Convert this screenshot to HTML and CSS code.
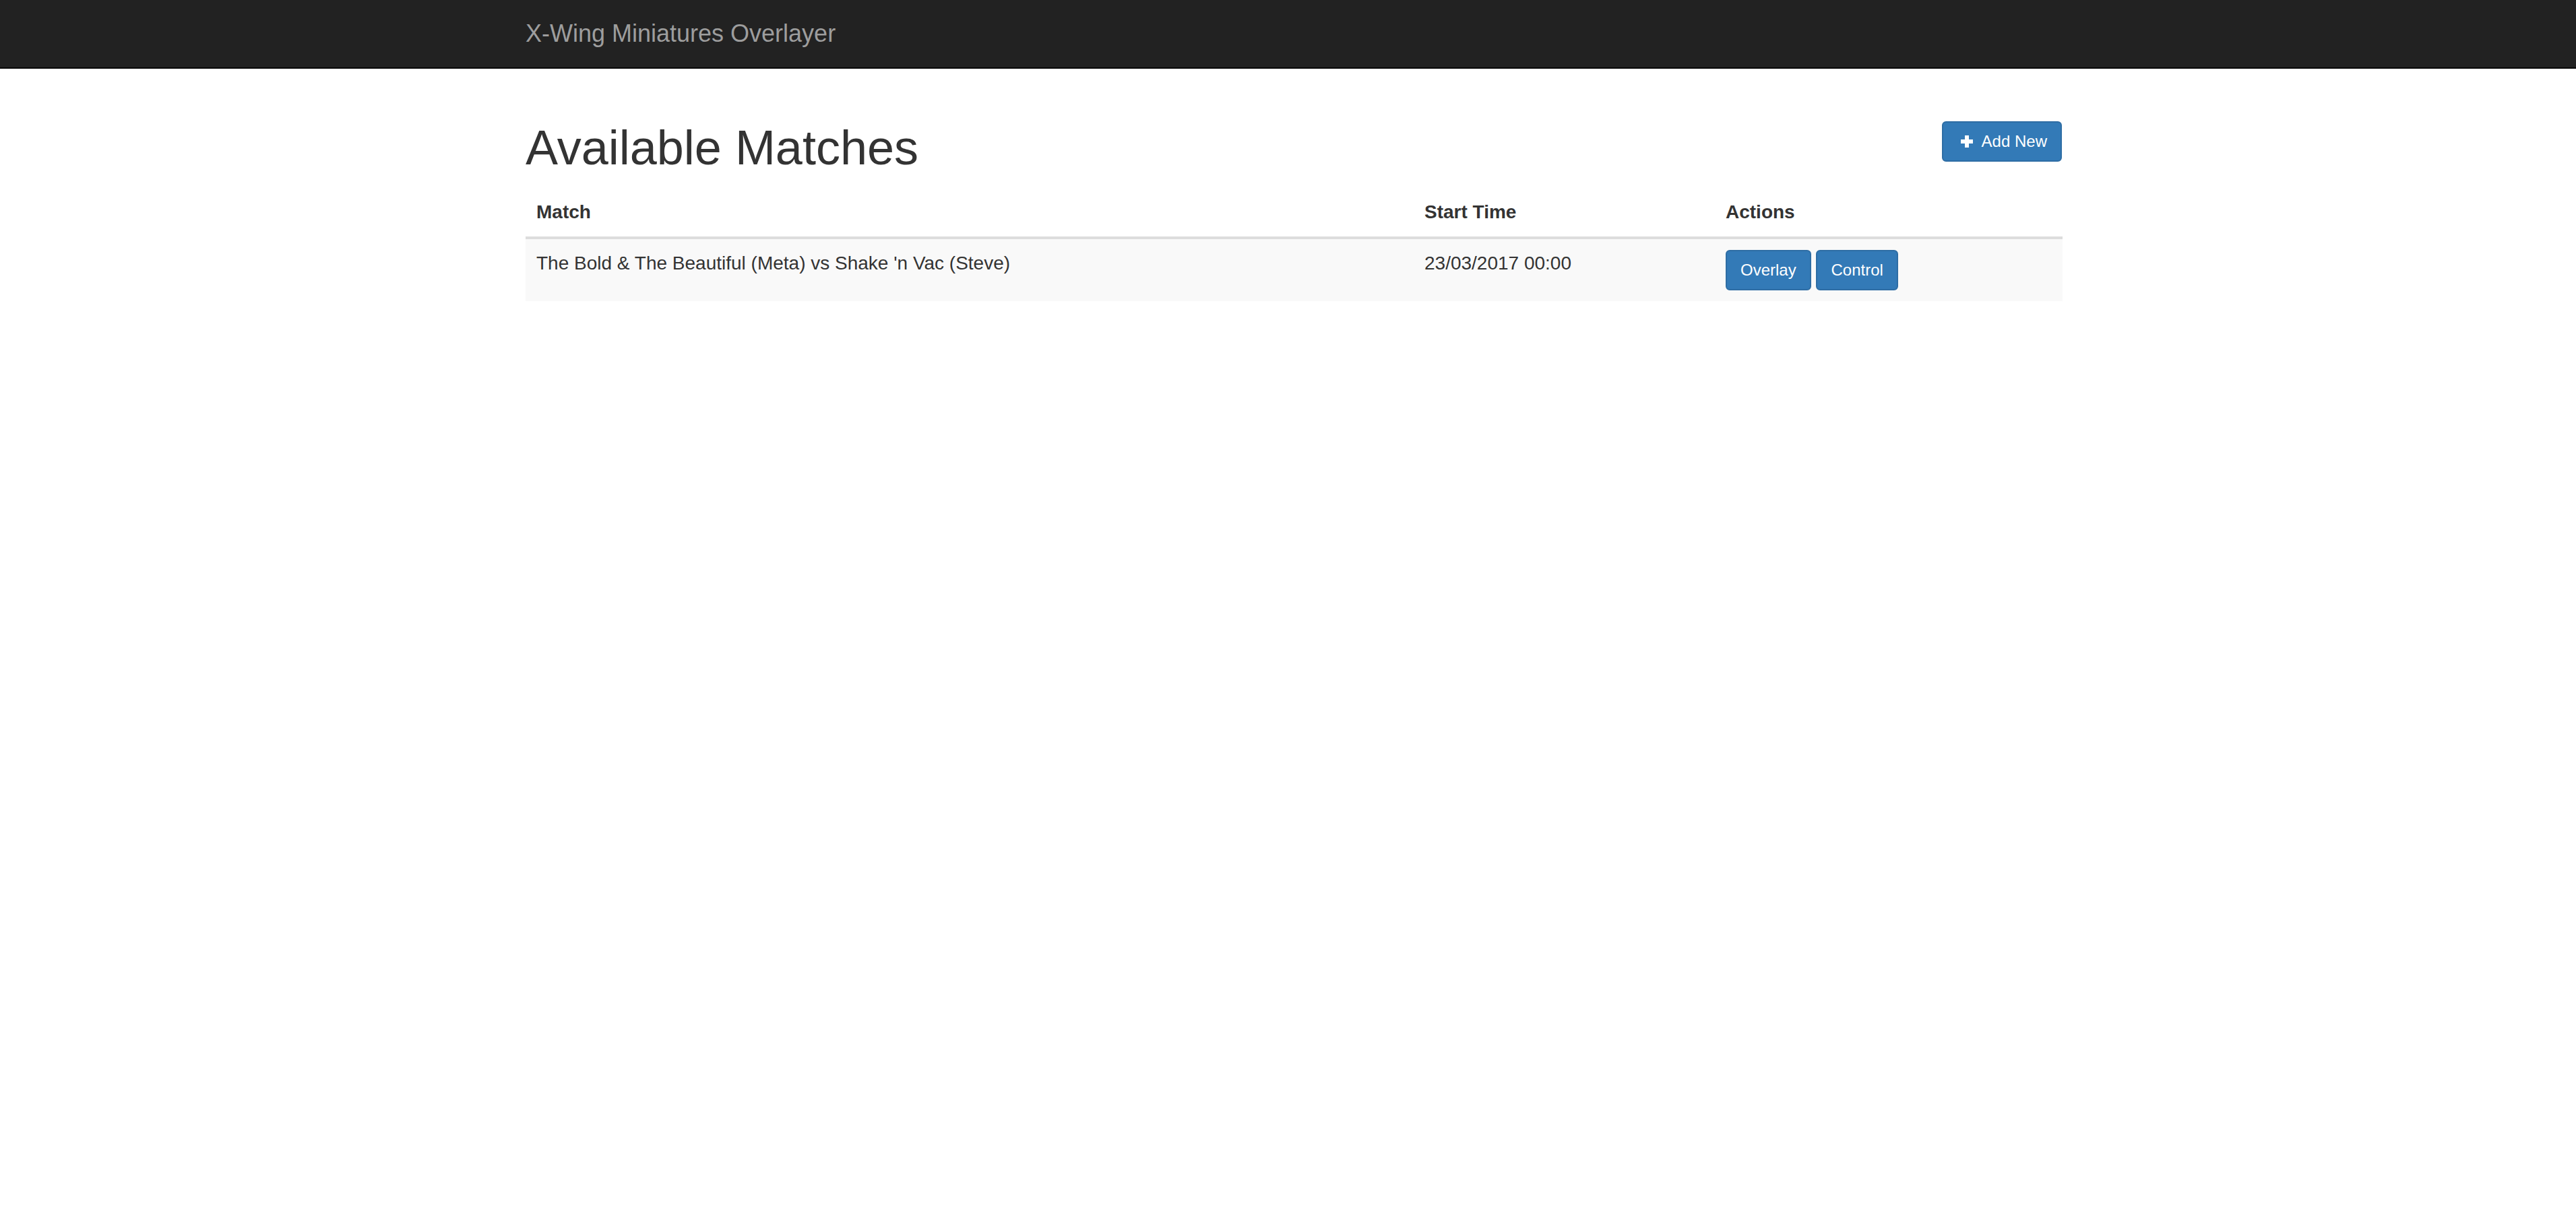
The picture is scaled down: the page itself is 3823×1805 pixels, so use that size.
FILE: index.html
```html
<!DOCTYPE html>
<html lang="en">
<head>
<meta charset="utf-8">
<title>X-Wing Miniatures Overlayer</title>
<link rel="stylesheet" href="styles.css">
</head>
<body>
<nav class="navbar">
  <div class="container">
    <a class="navbar-brand" href="#">X-Wing Miniatures Overlayer</a>
  </div>
</nav>
<main class="container content">
  <h1 class="page-title">
    <a class="btn btn-sm btn-primary pull-right" href="#"><svg class="icon-plus" viewBox="0 0 18 18" width="18" height="18" aria-hidden="true"><path d="M6 0h6v6h6v6h-6v6H6v-6H0V6h6z" fill="#fff"/></svg>Add New</a>
    Available Matches
  </h1>
  <table class="table table-striped">
    <colgroup>
      <col class="col-match">
      <col class="col-time">
      <col class="col-actions">
    </colgroup>
    <thead>
      <tr><th>Match</th><th>Start Time</th><th>Actions</th></tr>
    </thead>
    <tbody>
      <tr>
        <td>The Bold &amp; The Beautiful (Meta) vs Shake 'n Vac (Steve)</td>
        <td>23/03/2017 00:00</td>
        <td><a class="btn btn-sm btn-primary" href="#">Overlay</a> <a class="btn btn-sm btn-primary" href="#">Control</a></td>
      </tr>
    </tbody>
  </table>
</main>
</body>
</html>
```
FILE: styles.css
```css
* { box-sizing: border-box; }
html, body { margin: 0; padding: 0; }
body {
  font-family: "Liberation Sans", Arial, Helvetica, sans-serif;
  font-size: 28px;
  line-height: 40px;
  color: #333;
  background: #fff;
}
.container {
  width: 2340px;
  padding: 0 30px;
  margin: 0 auto 0 calc(50% - 1161.5px);
}
.content { display: flow-root; }
.navbar {
  background: #222;
  border-bottom: 2px solid #080808;
  height: 102px;
  margin-bottom: 38px;
}
.navbar-brand {
  display: block;
  height: 100px;
  padding: 30px 0;
  font-size: 36px;
  line-height: 40px;
  color: #9d9d9d;
  text-decoration: none;
}
.page-title {
  font-size: 72px;
  line-height: 1.1;
  font-weight: 500;
  margin: 40px 0 20px;
  color: #333;
}
.pull-right { float: right; }
.btn {
  display: inline-block;
  font-weight: 400;
  text-align: center;
  vertical-align: middle;
  white-space: nowrap;
  text-decoration: none;
  border: 2px solid transparent;
}
.btn-sm {
  padding: 10px 20px;
  font-size: 24px;
  line-height: 36px;
  border-radius: 6px;
}
.btn-primary {
  color: #fff;
  background: #337ab7;
  border-color: #2e6da4;
}
.page-title .btn { vertical-align: top; }
.icon-plus {
  display: inline-block;
  vertical-align: -1px;
  margin: 0 13px 0 6px;
}
.table {
  width: 100%;
  border-collapse: collapse;
  border-spacing: 0;
  table-layout: fixed;
  margin-bottom: 40px;
}
.col-match { width: 1318px; }
.col-time { width: 447px; }
.col-actions { width: 516px; }
.table th,
.table td {
  padding: 16px;
  text-align: left;
  vertical-align: top;
  line-height: 40px;
}
.table th {
  font-weight: 700;
  border-bottom: 4px solid #ddd;
  vertical-align: bottom;
}
.table td .btn { vertical-align: baseline; }
.table-striped tbody tr:nth-child(odd) { background: #f9f9f9; }
```
